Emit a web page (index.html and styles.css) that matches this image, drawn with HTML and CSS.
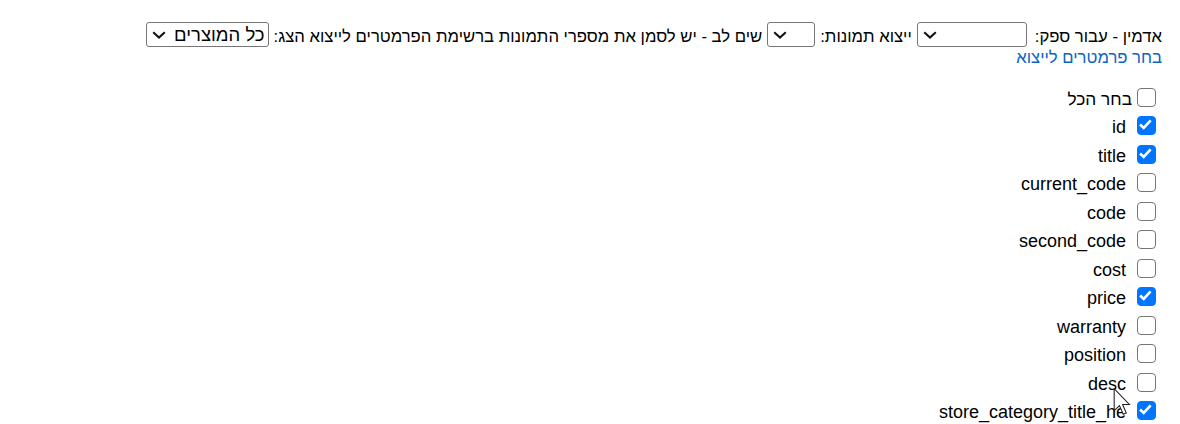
FILE: index.html
```html
<!DOCTYPE html>
<html lang="he" dir="rtl">
<head>
<meta charset="utf-8">
<title>ייצוא מוצרים</title>
<link rel="stylesheet" href="styles.css">
</head>
<body>
<div class="page">
  <div class="toolbar">
    <span class="lbl lbl-first">אדמין - עבור ספק:</span>
    <select class="sel sel-supplier"><option></option></select>
    <span class="lbl">ייצוא תמונות:</span>
    <select class="sel sel-images"><option></option></select>
    <span class="lbl">שים לב - יש לסמן את מספרי התמונות ברשימת הפרמטרים לייצוא הצג:</span>
    <select class="sel sel-show"><option>כל המוצרים</option></select>
  </div>
  <div class="linkline"><a class="link" href="#">בחר פרמטרים לייצוא</a></div>

  <ul class="fields">
    <li class="row row-all"><input class="cb" type="checkbox"><span class="name">בחר הכל</span></li>
    <li class="row"><input class="cb" type="checkbox" checked><span class="name" dir="ltr">id</span></li>
    <li class="row"><input class="cb" type="checkbox" checked><span class="name" dir="ltr">title</span></li>
    <li class="row"><input class="cb" type="checkbox"><span class="name" dir="ltr">current_code</span></li>
    <li class="row"><input class="cb" type="checkbox"><span class="name" dir="ltr">code</span></li>
    <li class="row"><input class="cb" type="checkbox"><span class="name" dir="ltr">second_code</span></li>
    <li class="row"><input class="cb" type="checkbox"><span class="name" dir="ltr">cost</span></li>
    <li class="row"><input class="cb" type="checkbox" checked><span class="name" dir="ltr">price</span></li>
    <li class="row"><input class="cb" type="checkbox"><span class="name" dir="ltr">warranty</span></li>
    <li class="row"><input class="cb" type="checkbox"><span class="name" dir="ltr">position</span></li>
    <li class="row"><input class="cb" type="checkbox"><span class="name" dir="ltr">desc</span></li>
    <li class="row"><input class="cb" type="checkbox" checked><span class="name" dir="ltr">store_category_title_he</span></li>
  </ul>
</div>
<svg class="cursor" width="18" height="27" viewBox="0 0 12 19" aria-hidden="true">
  <path d="M0.5,0.5 L0.5,16 L4.2,12.4 L6.9,18.5 L9,17.6 L6.4,11.6 L11.2,11.6 Z" fill="#fff" stroke="#222" stroke-width="0.75" stroke-linejoin="miter"/>
</svg>
</body>
</html>
```

FILE: styles.css
```css
html, body {
  margin: 0;
  padding: 0;
  background: #fff;
}

body {
  font-family: "Liberation Sans", Arial, sans-serif;
  font-size: 18px;
  color: #000;
  direction: rtl;
  overflow: hidden;
}

.page {
  padding: 22px 18px 0 18px;
}

.toolbar {
  display: flex;
  align-items: flex-start;
  gap: 5px;
  height: 25px;
  font-size: 16.7px;
}

.lbl {
  white-space: nowrap;
  line-height: 22px;
  padding-top: 4px;
}

.lbl-first {
  margin-left: 3px;
}

.sel {
  -webkit-appearance: none;
  appearance: none;
  font-family: "Liberation Sans", Arial, sans-serif;
  font-size: 18.5px;
  height: 25px;
  box-sizing: border-box;
  border: 1px solid #767676;
  border-radius: 3px;
  background-color: #fff;
  background-image: url("data:image/svg+xml;utf8,<svg xmlns='http://www.w3.org/2000/svg' width='14' height='8' viewBox='0 0 14 8'><path d='M1.2 1.2 L7 6.6 L12.8 1.2' fill='none' stroke='%23111' stroke-width='2'/></svg>");
  background-repeat: no-repeat;
  background-position: left 5px center;
  background-size: 14px 8px;
  color: #000;
  padding: 0 3px 0 22px;
  margin: 0;
  line-height: 23px;
}

.sel-supplier { width: 110px; }
.sel-images { width: 48px; }
.sel-show { width: 123px; }

.linkline {
  line-height: 17px;
  font-size: 16.7px;
  padding-top: 2px;
}

.link {
  color: #0b63c4;
  text-decoration: none;
}

.fields {
  list-style: none;
  margin: 17px 0 0 0;
  padding: 0 6px 0 0;
}

.row {
  display: flex;
  align-items: center;
  height: 28.5px;
  gap: 11px;
}

.cb {
  -webkit-appearance: none;
  appearance: none;
  width: 19px;
  height: 19px;
  margin: 0;
  flex: none;
  box-sizing: border-box;
  border: 1.8px solid #767676;
  border-radius: 4px;
  background: #fff;
}

.cb:checked {
  border-color: #0075ff;
  background-color: #0075ff;
  background-image: url("data:image/svg+xml;utf8,<svg xmlns='http://www.w3.org/2000/svg' width='19' height='19' viewBox='0 0 19 19'><path d='M3.9 9.3 L7.6 12.8 L14.6 5.3' fill='none' stroke='%23fff' stroke-width='2.7'/></svg>");
  background-repeat: no-repeat;
  background-position: -1.8px -1.8px;
  background-size: 19px 19px;
}

.row-all {
  gap: 5px;
}

.row-all .name {
  font-size: 17.3px;
}

.name {
  white-space: nowrap;
  padding-top: 4px;
}

.cursor {
  position: absolute;
  left: 1113px;
  top: 388px;
}
```
